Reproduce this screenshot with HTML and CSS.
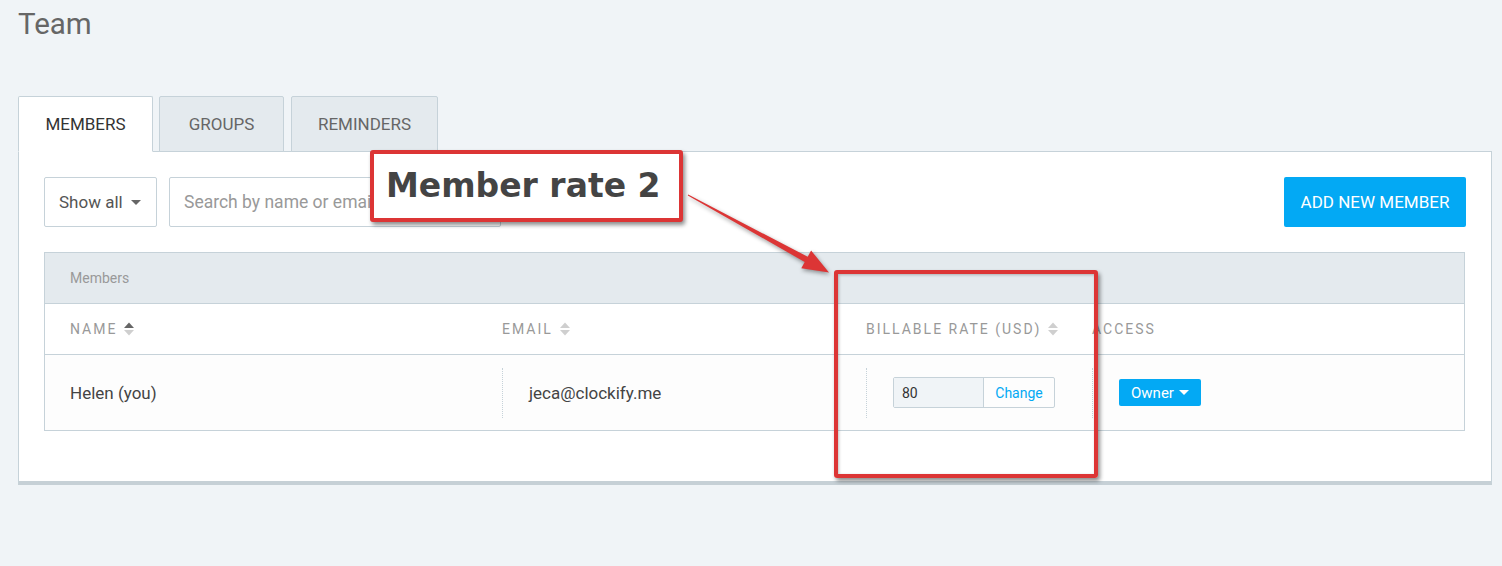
FILE: index.html
```html
<!DOCTYPE html>
<html lang="en">
<head>
<meta charset="utf-8">
<title>Team</title>
<link rel="stylesheet" href="styles.css">
</head>
<body>
<div class="page">
  <h1 class="title">Team</h1>

  <div class="tabs">
    <div class="tab tab-active tab-members">MEMBERS</div>
    <div class="tab tab-groups">GROUPS</div>
    <div class="tab tab-reminders">REMINDERS</div>
  </div>

  <div class="panel">
    <div class="toolbar">
      <div class="filters">
        <div class="select">Show all <span class="caret"></span></div>
        <div class="search">Search by name or email</div>
      </div>
      <div class="btn-primary">ADD NEW MEMBER</div>
    </div>

    <div class="table">
      <div class="table-title">Members</div>
      <div class="grid thead">
        <div class="th">NAME <svg class="sort" width="10" height="14" viewBox="0 0 10 14"><path d="M0 6 L5 0.5 L10 6 Z" fill="#666"/><path d="M0 8 L5 13.5 L10 8 Z" fill="#cfcfcf"/></svg></div>
        <div class="th">EMAIL <svg class="sort" width="10" height="14" viewBox="0 0 10 14"><path d="M0 6 L5 0.5 L10 6 Z" fill="#cfcfcf"/><path d="M0 8 L5 13.5 L10 8 Z" fill="#cfcfcf"/></svg></div>
        <div class="th">BILLABLE RATE (USD) <svg class="sort" width="10" height="14" viewBox="0 0 10 14"><path d="M0 6 L5 0.5 L10 6 Z" fill="#cfcfcf"/><path d="M0 8 L5 13.5 L10 8 Z" fill="#cfcfcf"/></svg></div>
        <div class="th">ACCESS</div>
      </div>
      <div class="grid trow">
        <div class="td"><span class="name">Helen (you)</span></div>
        <div class="td"><div class="cell-sep">jeca@clockify.me</div></div>
        <div class="td"><div class="cell-sep">
          <div class="rate">
            <span class="rate-value">80</span>
            <span class="rate-change">Change</span>
          </div>
        </div></div>
        <div class="td"><div class="cell-sep">
          <span class="owner">Owner <span class="caret caret-white"></span></span>
        </div></div>
      </div>
    </div>
  </div>
</div>

<div class="annot-label">Member rate 2</div>
<div class="annot-box"></div>
<svg class="annot-arrow" width="1502" height="566" viewBox="0 0 1502 566">
  <polygon points="688.2,194.6 807.7,256.8 811.1,250.6 829,272.5 801.3,268.2 804.7,262 687.8,195.4" fill="#dc3535"/>
</svg>
</body>
</html>
```
FILE: styles.css
```css
* { box-sizing: border-box; }

html, body {
  margin: 0;
  padding: 0;
}

body {
  background: #f0f4f7;
  font-family: Roboto, "Liberation Sans", Arial, sans-serif;
  color: #444;
  width: 1502px;
  height: 566px;
  overflow: hidden;
  position: relative;
}

.page {
  padding: 4px 10px 0 18px;
}

.title {
  margin: 0;
  font-size: 29.5px;
  font-weight: 400;
  line-height: 40px;
  color: #666;
}

.tabs {
  display: flex;
  margin-top: 52px;
  margin-bottom: -1px;
  position: relative;
  z-index: 1;
}

.tab {
  height: 56px;
  display: flex;
  align-items: center;
  justify-content: center;
  font-size: 17px;
  color: #666;
  background: #e4eaee;
  border: 1px solid #c6d2d9;
  border-radius: 2px 2px 0 0;
}

.tab-active {
  background: #fff;
  color: #333;
  border-bottom-color: #fff;
}

.tab-members { width: 135px; margin-right: 6px; }
.tab-groups { width: 125px; margin-right: 7px; }
.tab-reminders { width: 147px; }

.panel {
  width: 1474px;
  background: #fff;
  border: 1px solid #c6d2d9;
  border-bottom: 4px solid #c6d0d6;
  padding: 25px 25px 50px 25px;
}

.toolbar {
  display: flex;
  justify-content: space-between;
  align-items: center;
  height: 50px;
}

.filters {
  display: flex;
  gap: 12px;
  height: 100%;
}

.select {
  width: 113px;
  height: 50px;
  border: 1px solid #c6d2d9;
  border-radius: 2px;
  display: flex;
  align-items: center;
  padding-left: 14px;
  font-size: 17px;
  color: #555;
  gap: 8px;
}

.caret {
  display: inline-block;
  width: 0;
  height: 0;
  border-left: 5px solid transparent;
  border-right: 5px solid transparent;
  border-top: 5px solid #666;
}

.caret-white {
  border-top-color: #fff;
  margin-left: 5px;
  vertical-align: 3px;
}

.search {
  width: 332px;
  height: 50px;
  border: 1px solid #c6d2d9;
  border-radius: 2px;
  display: flex;
  align-items: center;
  padding-left: 14px;
  font-size: 17.5px;
  color: #999;
}

.btn-primary {
  width: 182px;
  height: 50px;
  background: #03a9f4;
  color: #fff;
  border-radius: 2px;
  display: flex;
  align-items: center;
  justify-content: center;
  font-size: 17px;
}

.table {
  margin-top: 25px;
  border: 1px solid #c6d2d9;
  width: 1421px;
}

.table-title {
  height: 51px;
  background: #e4eaee;
  border-bottom: 1px solid #c6d2d9;
  padding-left: 25px;
  display: flex;
  align-items: center;
  font-size: 14px;
  color: #999;
}

.grid {
  display: grid;
  grid-template-columns: 432px 364px 226px 1fr;
}

.thead {
  height: 51px;
  border-bottom: 1px solid #c6d2d9;
}

.th {
  display: flex;
  align-items: center;
  padding-left: 25px;
  font-size: 14px;
  letter-spacing: 2px;
  color: #999;
}

.sort {
  margin-left: 7px;
}

.trow {
  height: 75px;
  background: #fdfdfd;
}

.td {
  display: flex;
  align-items: center;
  padding-left: 25px;
  font-size: 17px;
  color: #444;
}

.cell-sep {
  height: 50px;
  border-left: 1px dotted #c6d2d9;
  padding-left: 26px;
  display: flex;
  align-items: center;
}

.rate {
  display: flex;
  height: 31px;
  border: 1px solid #c6d2d9;
  border-radius: 2px;
  font-size: 14px;
}

.rate-value {
  width: 90px;
  background: #f0f4f7;
  border-right: 1px solid #c6d2d9;
  display: flex;
  align-items: center;
  padding-left: 8px;
  color: #333;
}

.rate-change {
  width: 70px;
  display: flex;
  align-items: center;
  justify-content: center;
  color: #03a9f4;
}

.owner {
  display: inline-flex;
  align-items: center;
  height: 27px;
  padding: 0 12px 0 12px;
  background: #03a9f4;
  color: #fff;
  border-radius: 2px;
  font-size: 15px;
}

/* annotation overlay */
.annot-label {
  position: absolute;
  left: 370px;
  top: 150px;
  width: 313px;
  height: 72px;
  background: #fff;
  border: 4px solid #dc3535;
  border-radius: 3px;
  box-shadow: 2px 3px 4px rgba(0, 0, 0, 0.45);
  font-family: "DejaVu Sans", sans-serif;
  font-weight: 700;
  font-size: 33px;
  line-height: 64px;
  color: #444;
  padding-left: 12px;
  white-space: nowrap;
  z-index: 5;
}

.annot-box {
  position: absolute;
  left: 834px;
  top: 270px;
  width: 264px;
  height: 208px;
  border: 4px solid #dc3535;
  border-radius: 3px;
  box-shadow: 2px 3px 4px rgba(0, 0, 0, 0.45), inset 1px 1px 3px rgba(0, 0, 0, 0.25);
  z-index: 5;
}

.annot-arrow {
  position: absolute;
  left: 0;
  top: 0;
  z-index: 4;
  filter: drop-shadow(1px 2px 2px rgba(0, 0, 0, 0.4));
  pointer-events: none;
}
```
